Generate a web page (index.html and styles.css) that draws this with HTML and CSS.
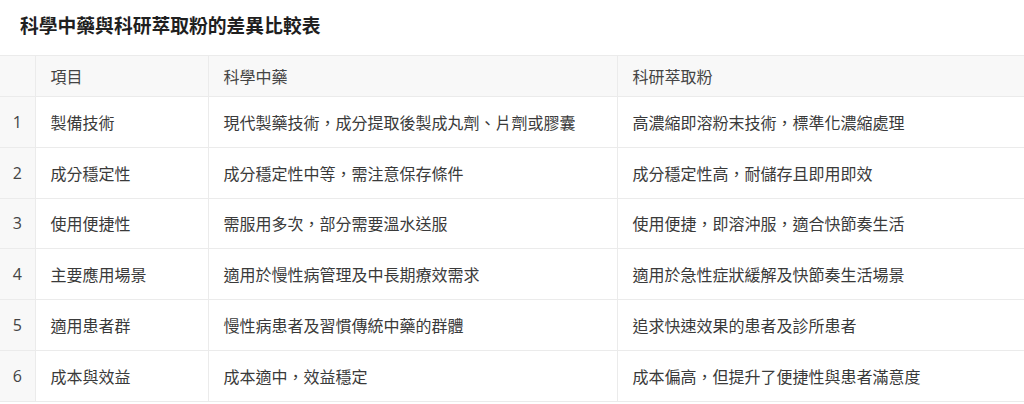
FILE: index.html
```html
<!DOCTYPE html>
<html lang="zh-Hant">
<head>
<meta charset="utf-8">
<title>科學中藥與科研萃取粉的差異比較表</title>
<link rel="stylesheet" href="styles.css">
</head>
<body>
<div class="page">
  <h1 class="title">科學中藥與科研萃取粉的差異比較表</h1>
  <div class="table-wrap">
    <table class="cmp">
      <colgroup>
        <col class="c-idx"><col class="c-item"><col class="c-a"><col class="c-b">
      </colgroup>
      <thead>
        <tr><th class="idx"></th><th>項目</th><th>科學中藥</th><th>科研萃取粉</th></tr>
      </thead>
      <tbody>
        <tr><td class="idx">1</td><td>製備技術</td><td>現代製藥技術，成分提取後製成丸劑、片劑或膠囊</td><td>高濃縮即溶粉末技術，標準化濃縮處理</td></tr>
        <tr><td class="idx">2</td><td>成分穩定性</td><td>成分穩定性中等，需注意保存條件</td><td>成分穩定性高，耐儲存且即用即效</td></tr>
        <tr><td class="idx">3</td><td>使用便捷性</td><td>需服用多次，部分需要溫水送服</td><td>使用便捷，即溶沖服，適合快節奏生活</td></tr>
        <tr><td class="idx">4</td><td>主要應用場景</td><td>適用於慢性病管理及中長期療效需求</td><td>適用於急性症狀緩解及快節奏生活場景</td></tr>
        <tr><td class="idx">5</td><td>適用患者群</td><td>慢性病患者及習慣傳統中藥的群體</td><td>追求快速效果的患者及診所患者</td></tr>
        <tr><td class="idx">6</td><td>成本與效益</td><td>成本適中，效益穩定</td><td>成本偏高，但提升了便捷性與患者滿意度</td></tr>
      </tbody>
    </table>
  </div>
</div>
</body>
</html>
```
FILE: styles.css
```css
html, body {
  margin: 0;
  padding: 0;
  background: #ffffff;
  overflow: hidden;
}
body {
  font-family: "Noto Sans CJK TC", "Noto Sans", "Liberation Sans", sans-serif;
  color: #333333;
}
.page {
  width: 1024px;
}
.title {
  margin: 0;
  padding: 13px 20px 0 20px;
  height: 55px;
  box-sizing: border-box;
  font-size: 18.8px;
  line-height: 24px;
  font-weight: 700;
  color: #1f1f1f;
}
.table-wrap {
  width: 1024px;
  overflow: hidden;
}
.cmp {
  width: 1040px;
  border-collapse: collapse;
  table-layout: fixed;
  font-size: 16px;
}
.c-idx { width: 35px; }
.c-item { width: 173px; }
.c-a { width: 409px; }
.c-b { width: 423px; }
.cmp th, .cmp td {
  border: 1px solid #ebebeb;
  text-align: left;
  padding: 0 15px;
  font-weight: 400;
  line-height: 24px;
  white-space: nowrap;
  color: #3a3a3a;
}
.cmp tr > :first-child { border-left: none; }
.cmp th {
  height: 40px;
  background: #f8f8f8;
  color: #444444;
}
.cmp td {
  height: 49.8px;
}
.cmp .idx {
  background: #f8f8f8;
  text-align: center;
  padding: 0;
  color: #444444;
  font-family: "Open Sans", "Noto Sans", sans-serif;
  font-size: 16px;
}
```
